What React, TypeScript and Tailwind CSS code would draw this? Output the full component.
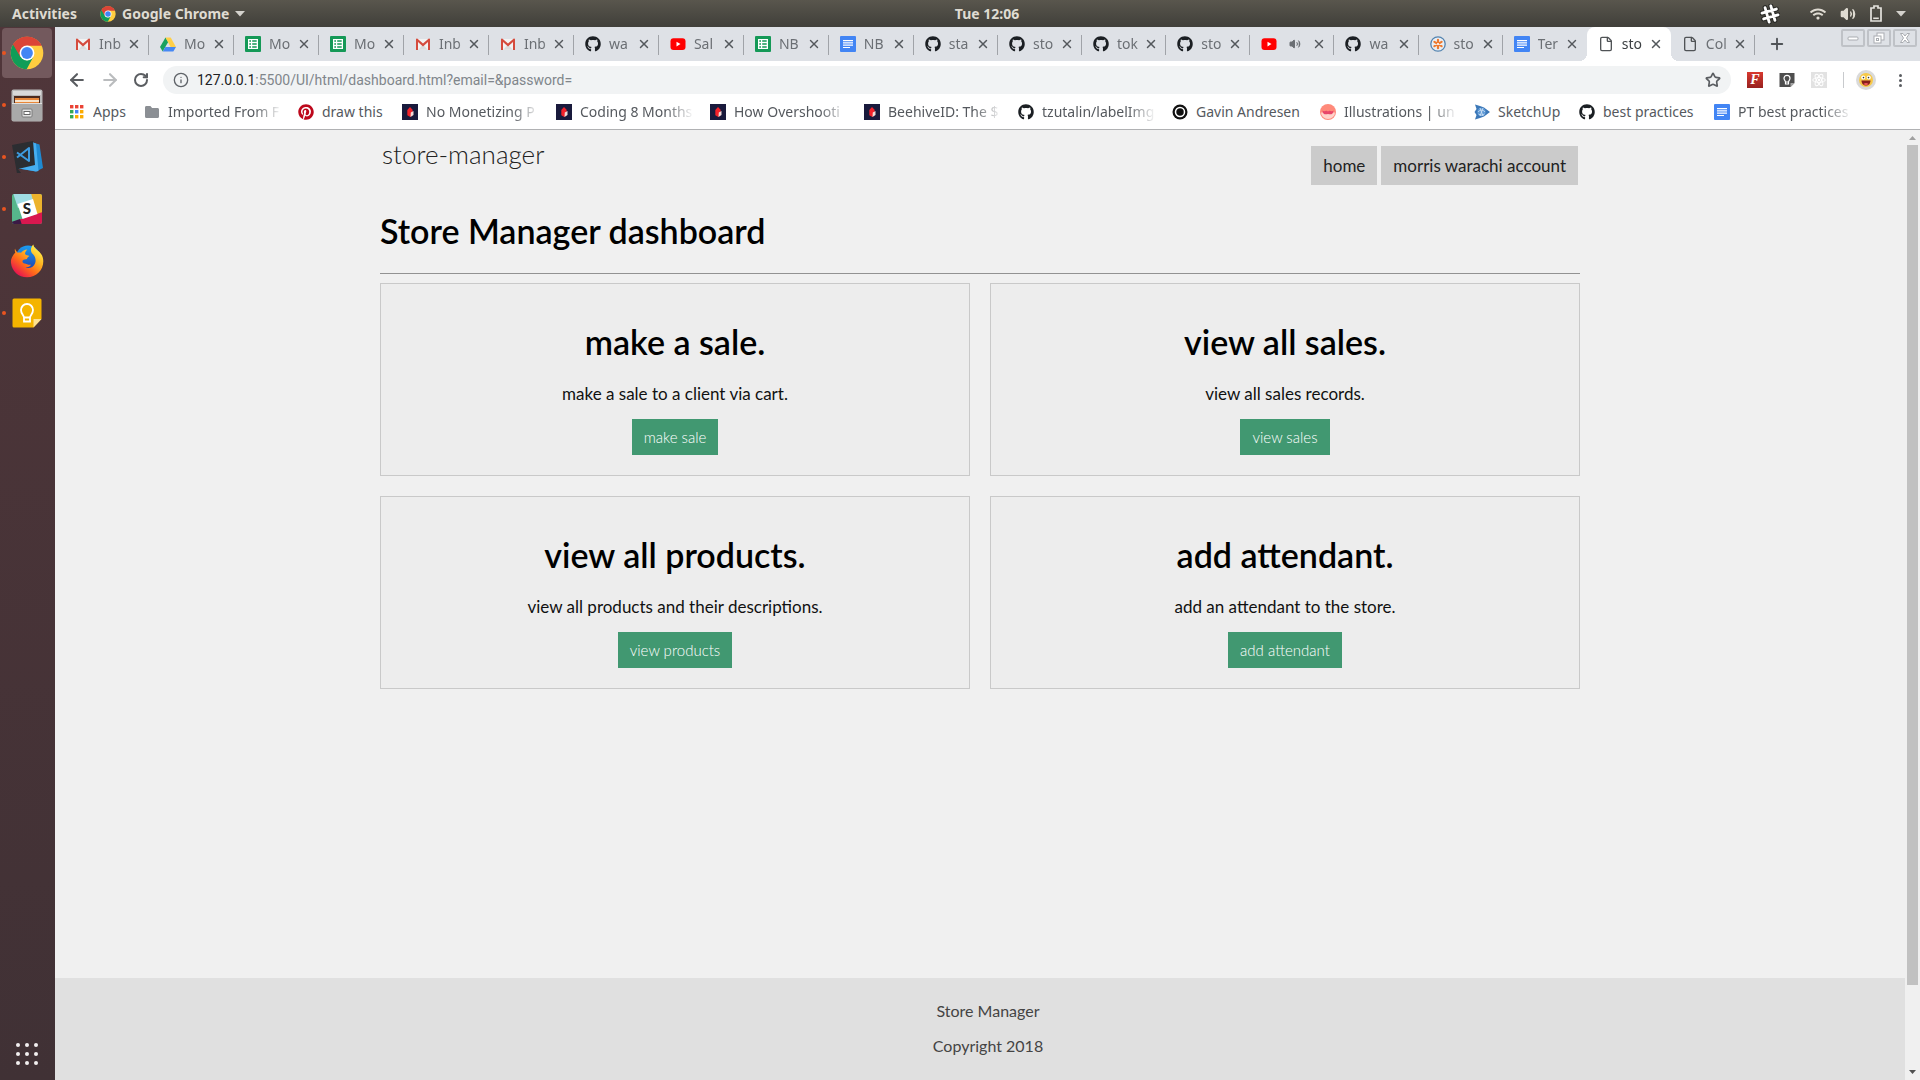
import { useId, type ReactNode } from "react";
import { FaGithub, FaPinterest, FaWifi } from "react-icons/fa";
import { ArrowLeft, ArrowRight, File, Info, Lightbulb, Plus, RotateCw, Star, Volume2, X } from "lucide-react";

/* ---------- icons ---------- */

function ChromeLogo({ className }: { className: string }) {
  const id = useId();
  return (
    <svg viewBox="0 0 48 48" className={className} aria-hidden="true">
      <clipPath id={id}>
        <circle cx="24" cy="24" r="23" />
      </clipPath>
      <g clipPath={`url(#${id})`}>
        <rect width="48" height="48" fill="#ffcd40" />
        <path d="M0 0h48v13.5H24L14.5 29 0 8z" fill="#db4437" />
        <path d="M4 11 14.9 29.2 24 34.5 32.6 30 23 48H0V6z" fill="#0f9d58" />
        <path d="M3 9.5 14.6 29.4 14 22 24 13.5h24V0H0z" fill="#db4437" />
      </g>
      <circle cx="24" cy="24" r="10.5" fill="#fff" />
      <circle cx="24" cy="24" r="8.3" fill="#4285f4" />
    </svg>
  );
}

function Gmail() {
  return (
    <svg viewBox="0 0 16 16" className="size-4" aria-hidden="true">
      <path d="M1.5 3h13v10.5h-13z" fill="#f2f2f2" />
      <path d="m3.5 13.5 4.5-5 4.5 5z" fill="#dcdcdc" />
      <path d="M1 3.2V14h2V6l5 4.4L13 6v8h2V3.2c0-.6-.8-.9-1.5-.5L8 7.6 2.5 2.7C1.800 2.300 1 2.600 1 3.200z" fill="#d54b3d" />
    </svg>
  );
}

function Drive() {
  return (
    <svg viewBox="0 0 16 16" className="size-4" aria-hidden="true">
      <path d="M5.500 1.500 0 11l2.700 4.500L8.200 6z" fill="#1aa15f" />
      <path d="M5.500 1.500h5.200L16 11h-5.400z" fill="#ffcf48" />
      <path d="M5.400 11H16l-2.700 4.500H2.700z" fill="#4688f4" />
    </svg>
  );
}

function Sheets() {
  return (
    <svg viewBox="0 0 16 16" className="size-4" aria-hidden="true">
      <rect width="16" height="16" rx="1" fill="#159957" />
      <path d="M3 3h10v10H3z" fill="#fff" />
      <path d="M4.300 4.300H6v1.500H4.300zM7.200 4.300h4.500v1.500H7.200zM4.300 7.200H6v1.500H4.300zM7.200 7.200h4.500v1.500H7.200zM4.300 10.200H6v1.500H4.300zM7.200 10.200h4.500v1.500H7.200z" fill="#159957" />
    </svg>
  );
}

function Docs() {
  return (
    <svg viewBox="0 0 16 16" className="size-4" aria-hidden="true">
      <rect width="16" height="16" rx="1" fill="#4285f4" />
      <path d="M3 4h10v1.200H3zM3 6.300h10v1.200H3zM3 8.600h10v1.200H3zM3 10.900h7v1.200H3z" fill="#fff" />
    </svg>
  );
}

function YouTube() {
  return (
    <svg viewBox="0 0 16 16" className="size-4" aria-hidden="true">
      <rect x="0.500" y="2.200" width="15" height="11.800" rx="3" fill="#f00" />
      <path d="m6.500 5.700 4 2.400-4 2.400z" fill="#fff" />
    </svg>
  );
}

const GitHub = () => <FaGithub className="size-4 text-[#1b1f23]" aria-hidden="true" />;
const Page = () => <File className="size-4 text-[#505356]" strokeWidth={2} aria-hidden="true" />;

function Swirl() {
  return (
    <svg viewBox="0 0 16 16" className="size-4" aria-hidden="true">
      <circle cx="8" cy="8" r="7.200" fill="#e9eef3" stroke="#5484b0" strokeWidth="1.300" />
      <g stroke="#ee7a30" strokeWidth="2.200" strokeLinecap="round">
        <path d="M8 3.800v8.400M4.400 5.900l7.200 4.200M11.600 5.900l-7.200 4.200" />
      </g>
      <circle cx="8" cy="8" r="1.100" fill="#fff" />
    </svg>
  );
}

function AppsGrid() {
  const colors = ["#ea4335", "#ea4335", "#ea4335", "#34a853", "#4285f4", "#fbab00", "#34a853", "#fbab00", "#fbab00"];
  return (
    <svg viewBox="0 0 16 16" className="size-4" aria-hidden="true">
      {colors.map((c, i) => (
        <rect key={i} x={1 + (i % 3) * 5} y={1 + Math.floor(i / 3) * 5} width="3.400" height="3.400" fill={c} />
      ))}
    </svg>
  );
}

function Folder() {
  return (
    <svg viewBox="0 0 16 16" className="size-4" aria-hidden="true">
      <path d="M1 3.500C1 2.700 1.600 2 2.400 2h4l1.700 2h5.500c.8 0 1.400.7 1.400 1.500v7c0 .8-.6 1.500-1.400 1.500H2.400C1.600 14 1 13.300 1 12.500z" fill="#8b8f94" />
    </svg>
  );
}

function Gem() {
  return (
    <svg viewBox="0 0 16 16" className="size-4" aria-hidden="true">
      <rect width="16" height="16" fill="#191a3c" />
      <path d="m8 3 2.600 2.800V11l-2.300 2-3-1.800V6z" fill="#f3222a" />
      <path d="m8.800 8.500 2.700-1.500v4l-3 2z" fill="#f3dcd8" />
    </svg>
  );
}

function Ring() {
  return (
    <svg viewBox="0 0 16 16" className="size-4" aria-hidden="true">
      <circle cx="8" cy="8" r="7.500" fill="#111" />
      <circle cx="8" cy="8" r="4.500" fill="#111" stroke="#fff" strokeWidth="1.500" />
    </svg>
  );
}

function Undraw() {
  return (
    <svg viewBox="0 0 16 16" className="size-4" aria-hidden="true">
      <circle cx="8" cy="8" r="8" fill="#ff8a7a" />
      <path d="M1 8.500h14a7 6.500 0 0 1-14 0z" fill="#ffd3cb" />
      <path d="M2.500 6.500c2 2 3.500-1 5.500 1 2-2 3.500 1 5.500-1C13.500 10 11 11 8 10c-3 1-5.500 0-5.500-3.500z" fill="#e8476a" />
    </svg>
  );
}

function SketchUp() {
  return (
    <svg viewBox="0 0 16 16" className="size-4" aria-hidden="true">
      <path d="M1 .5 6 2l4 1.500L16 8l-6 4.500L6 14l-5 1.500L2.500 11 .5 8l2-3z" fill="#3c78b8" />
      <circle cx="7.500" cy="8" r="4.200" fill="#5f9ad6" />
      <path d="M4 8c2-2.500 5-2.500 7 0M4.500 10c2 1.500 4.500 1.500 6 0M6 4l3 8M9 4 6 12" stroke="#d5e6f7" strokeWidth=".8" fill="none" />
    </svg>
  );
}

function SlackHash() {
  return (
    <svg viewBox="0 0 20 20" className="size-5" aria-hidden="true">
      {["#2a2a27", "#fff"].map((c, i) => (
        <g key={c} stroke={c} strokeWidth={i ? 2.800 : 5} strokeLinecap="round" transform="rotate(-16 10 10)">
          <path d="M7 2.500v15M13 2.500v15M2.500 7h15M2.500 13h15" />
        </g>
      ))}
    </svg>
  );
}

function Caret() {
  return (
    <svg viewBox="0 0 10 6" className="h-1.5 w-2.5" aria-hidden="true">
      <path d="M0 0h10L5 5.500z" fill="#d4d2cd" />
    </svg>
  );
}

function Battery() {
  return (
    <svg viewBox="0 0 12 17" className="h-[17px] w-3" aria-hidden="true">
      <path d="M4 1h4v2h3v13H1V3h3z" fill="none" stroke="#e4e2dd" strokeWidth="1.700" />
      <path d="M3.200 12.500h5.600v1.600H3.200z" fill="#e4e2dd" />
    </svg>
  );
}

function ReactMark() {
  return (
    <svg viewBox="0 0 16 16" className="size-4" aria-hidden="true">
      <rect width="16" height="16" fill="#e2e2e2" />
      <g fill="none" stroke="#fff" strokeWidth="1">
        <ellipse cx="8" cy="8" rx="6.300" ry="2.400" />
        <ellipse cx="8" cy="8" rx="6.300" ry="2.400" transform="rotate(60 8 8)" />
        <ellipse cx="8" cy="8" rx="6.300" ry="2.400" transform="rotate(120 8 8)" />
      </g>
      <circle cx="8" cy="8" r="1.200" fill="#fff" />
    </svg>
  );
}

function KeepMini() {
  return (
    <svg viewBox="0 0 16 16" className="size-4" aria-hidden="true">
      <path d="M.5 1h15v10l-4 4H.5z" fill="#4e4e4e" />
      <path d="M15.500 11v0l-4 4v-4z" fill="#a5a5a5" />
      <path d="M6.500 10C6.500 8.800 5 8.300 5 6.300a3 3 0 0 1 6 0c0 2-1.500 2.500-1.500 3.700zM6.500 10.500V12h3v-1.500" fill="none" stroke="#fff" strokeWidth="1.200" />
    </svg>
  );
}

function Avatar() {
  return (
    <svg viewBox="0 0 20 20" className="size-5" aria-hidden="true">
      <circle cx="10" cy="10" r="10" fill="#dadada" />
      <circle cx="10" cy="10" r="7" fill="#f7c948" />
      <circle cx="7.200" cy="7.500" r="2" fill="#fff" />
      <circle cx="12.800" cy="7.500" r="2" fill="#fff" />
      <circle cx="7.500" cy="7.600" r=".8" fill="#333" />
      <circle cx="12.500" cy="7.600" r=".8" fill="#333" />
      <path d="M5.500 10.500h9c0 3-2 5-4.500 5s-4.500-2-4.500-5z" fill="#8a1f1b" />
      <path d="M7.500 14c1.500-1.300 3.500-1.300 5 0-1.300 1.500-3.700 1.500-5 0z" fill="#ef5b5b" />
    </svg>
  );
}

function Files() {
  return (
    <svg viewBox="0 0 32 33" className="h-[33px] w-8" aria-hidden="true">
      <rect x=".5" y=".5" width="31" height="32" rx="2" fill="#b9b9b9" />
      <rect x="2" y="2" width="28" height="4" fill="#d9d9d9" />
      <rect x="3" y="7" width="26" height="8" fill="#4b2a1e" />
      <rect x="4" y="9" width="24" height="5" fill="#e8873a" />
      <rect x="4" y="11" width="24" height="2" fill="#f7e3cb" />
      <rect x="1" y="14" width="30" height="18" rx="1" fill="#a9a9a9" />
      <rect x="1" y="14" width="30" height="1" fill="#dedede" />
      <rect x="11" y="20" width="10" height="8" rx="1" fill="#e3e3e3" stroke="#7b7b7b" />
      <rect x="13" y="22.500" width="6" height="3" fill="#fff" stroke="#666" />
    </svg>
  );
}

function VSCode() {
  return (
    <svg viewBox="0 0 32 32" className="size-8" aria-hidden="true">
      <path d="M22 1.500 28.500 3.500 32 27l-7 3.500L8 27.500z" fill="#1f8ad2" />
      <path d="m22 1.500 3 1L27.500 30l-2.500.5L8 27.500z" fill="#46aef0" />
      <path d="M1 4 22 0l2 24-17 4 3 4-4 .5z" fill="#2b2d31" />
      <path d="m6 11.500 12 8.500V7L6 16.500" fill="none" stroke="#3d9be0" strokeWidth="2" strokeLinejoin="round" />
    </svg>
  );
}

function SlackTile() {
  return (
    <svg viewBox="0 0 32 32" className="size-8" aria-hidden="true">
      <clipPath id="slack-tile">
        <rect x="1" y="1" width="30" height="30" rx="2" />
      </clipPath>
      <g clipPath="url(#slack-tile)">
        <path d="M0 0h32v32H0z" fill="#56b68b" />
        <path d="M2 0h22l3 8-20 7z" fill="#9fdce3" />
        <path d="M20 0h12v22l-6 1z" fill="#ecb32d" />
        <path d="m32 19-25 8 3 5h22z" fill="#d9184f" />
        <path d="m0 29 9-3 2 6H0z" fill="#3b1a45" />
        <path d="m6.500 11 15.500-5 4.500 15-15 5z" fill="#fff" />
      </g>
      <text x="16" y="21" textAnchor="middle" fontFamily="Lato, sans-serif" fontWeight="900" fontSize="15" fill="#222">
        S
      </text>
    </svg>
  );
}

function Firefox() {
  return (
    <svg viewBox="0 0 34 34" className="size-[34px]" aria-hidden="true">
      <defs>
        <linearGradient id="fox" x1="0.850" y1="0.100" x2="0.200" y2="0.900">
          <stop offset="0" stopColor="#fff04a" />
          <stop offset="0.350" stopColor="#ffb020" />
          <stop offset="0.650" stopColor="#ff6a1a" />
          <stop offset="1" stopColor="#e8174e" />
        </linearGradient>
        <linearGradient id="globe" x1="0" y1="0" x2="0" y2="1">
          <stop offset="0" stopColor="#1b9df0" />
          <stop offset="1" stopColor="#1f3fae" />
        </linearGradient>
      </defs>
      <circle cx="18" cy="14" r="12.500" fill="url(#globe)" />
      <path
        d="M5 4.500C4.600 6 4.800 7.500 5.300 8.600 2 12 .6 15.500 1 19c.8 8 7.500 14.300 16 14.300 9.500 0 16.300-7.300 16.300-16 0-5-2.300-8.300-5-10.300-2.300-1.800-4.600-3.700-5-6.500-2.600 2.800-3 6-1.500 8.500 3.300 2.500 4.700 6.800 3.200 10.500-1.700 4-6 5.500-9.500 4 2.500 0 4.500-1 5.500-2.800-2.500.6-4.500-1-6.500-1.200-1.500-.2-2.500-1.500-1.800-3 1-1.500 3-1 4.300-1.500 0-1.500 1.500-2.300 2.500-3-1.800-.8-3.500-.6-4.500-2 .2-2 1-3.300 2.300-4.500-2.800.2-4.800 1.500-6.300 3.200-1.300-.4-2.300-.3-3.300 0C6.400 7.600 5.400 6.200 5 4.500z"
        fill="url(#fox)"
      />
    </svg>
  );
}

function Keep() {
  return (
    <svg viewBox="0 0 30 30" className="size-[30px]" aria-hidden="true">
      <path d="M2 .5h26a1.500 1.500 0 0 1 1.500 1.500v19l-8 8.500H2A1.500 1.500 0 0 1 .5 28V2A1.500 1.500 0 0 1 2 .5z" fill="#f4b400" />
      <path d="M29.500 21v0l-8 8.500V21z" fill="#fde293" />
      <path d="M12 19.500c0-2-3-3.500-3-7.500a6 6 0 0 1 12 0c0 4-3 5.500-3 7.500zM12 20v3.500h6V20" fill="none" stroke="#fff" strokeWidth="1.800" />
    </svg>
  );
}

/* ---------- data ---------- */

const tabs: { title: string; icon: () => ReactNode; active?: boolean; sound?: boolean }[] = [
  { title: "Inb", icon: Gmail },
  { title: "Mo", icon: Drive },
  { title: "Mo", icon: Sheets },
  { title: "Mo", icon: Sheets },
  { title: "Inb", icon: Gmail },
  { title: "Inb", icon: Gmail },
  { title: "wa", icon: GitHub },
  { title: "Sal", icon: YouTube },
  { title: "NB", icon: Sheets },
  { title: "NB", icon: Docs },
  { title: "sta", icon: GitHub },
  { title: "sto", icon: GitHub },
  { title: "tok", icon: GitHub },
  { title: "sto", icon: GitHub },
  { title: "", icon: YouTube, sound: true },
  { title: "wa", icon: GitHub },
  { title: "sto", icon: Swirl },
  { title: "Ter", icon: Docs },
  { title: "sto", icon: Page, active: true },
  { title: "Col", icon: Page },
];

const fade = "[mask-image:linear-gradient(to_right,black_75%,transparent)]";

const bookmarks: { title: string; icon: () => ReactNode; size: string }[] = [
  { title: "Apps", icon: AppsGrid, size: "w-[35px]" },
  { title: "Imported From F", icon: Folder, size: "w-[114px] " + fade },
  { title: "draw this", icon: () => <FaPinterest className="size-4 text-[#bd081c]" aria-hidden="true" />, size: "w-16" },
  { title: "No Monetizing P", icon: Gem, size: "w-[114px] " + fade },
  { title: "Coding 8 Months", icon: Gem, size: "w-[114px] " + fade },
  { title: "How Overshooti", icon: Gem, size: "w-[114px] " + fade },
  { title: "BeehiveID: The $", icon: Gem, size: "w-[114px] " + fade },
  { title: "tzutalin/labelImg", icon: GitHub, size: "w-[114px] " + fade },
  { title: "Gavin Andresen", icon: Ring, size: "w-[108px]" },
  { title: "Illustrations | un", icon: Undraw, size: "w-[114px] " + fade },
  { title: "SketchUp", icon: SketchUp, size: "w-[65px]" },
  { title: "best practices", icon: GitHub, size: "w-[95px]" },
  { title: "PT best practices", icon: Docs, size: "w-[114px] " + fade },
];

const dock = [
  { name: "Google Chrome", icon: <ChromeLogo className="size-[34px]" />, running: true, active: true },
  { name: "Files", icon: <Files />, running: true },
  { name: "Visual Studio Code", icon: <VSCode />, running: true },
  { name: "Slack", icon: <SlackTile />, running: true },
  { name: "Firefox", icon: <Firefox />, running: false },
  { name: "Keep", icon: <Keep />, running: true },
];

const cards = [
  { title: "make a sale.", text: "make a sale to a client via cart.", action: "make sale" },
  { title: "view all sales.", text: "view all sales records.", action: "view sales" },
  { title: "view all products.", text: "view all products and their descriptions.", action: "view products" },
  { title: "add attendant.", text: "add an attendant to the store.", action: "add attendant" },
];

/* ---------- desktop ---------- */

function TopBar() {
  return (
    <header className="flex h-[27px] shrink-0 items-center bg-linear-to-b from-[#59564d] to-[#403f3a] px-3 text-sm font-bold text-[#dfdbd2]">
      <div className="flex flex-1 items-center">
        <button className="w-[88px] text-left">Activities</button>
        <button className="flex items-center gap-1.5">
          <ChromeLogo className="size-4" />
          Google Chrome
          <Caret />
        </button>
      </div>
      <button className="pl-14">Tue 12:06</button>
      <div className="flex flex-1 items-center justify-end pr-0.5">
        <button aria-label="Slack" className="mr-[30px]">
          <SlackHash />
        </button>
        <button aria-label="System menu" className="flex items-center gap-3.5">
          <FaWifi className="size-4" />
          <Volume2 className="size-4 fill-current" />
          <Battery />
          <Caret />
        </button>
      </div>
    </header>
  );
}

function Dock() {
  return (
    <nav aria-label="Dock" className="flex w-[55px] shrink-0 flex-col bg-linear-to-b from-[#50363a] to-[#403135]">
      {dock.map((d) => (
        <div key={d.name} className="flex h-[52px] items-center">
          <button
            aria-label={d.name}
            className={"relative mx-0.5 flex h-[50px] w-[50px] items-center justify-center rounded-sm " + (d.active ? "bg-[#73595d]" : "")}
          >
            {d.running && <span className="absolute left-0 size-1 rounded-full bg-[#e95420]" />}
            {d.icon}
          </button>
        </div>
      ))}
      <button aria-label="Show applications" className="mt-auto mb-[15px] ml-4 grid w-[22px] grid-cols-3 gap-[5px]">
        {Array.from({ length: 9 }, (_, i) => (
          <span key={i} className="size-1 rounded-full bg-[#f2f0f0]" />
        ))}
      </button>
    </nav>
  );
}

function WindowButton({ label, children }: { label: string; children: ReactNode }) {
  return (
    <button aria-label={label} className="flex h-[18px] w-6 items-center justify-center rounded-xs border-2 border-[#bfc2c7] bg-[#dee1e6]">
      <svg viewBox="0 0 14 12" className="h-3 w-3.5" fill="#fff" stroke="#a9acb1" aria-hidden="true">
        {children}
      </svg>
    </button>
  );
}

function TabStrip() {
  return (
    <div className="flex h-[34px] bg-[#dee1e6] pl-[9px] text-sm text-[#6b6f74]">
      <div role="tablist" className="flex min-w-0 flex-1">
        {tabs.map((t, i) => (
          <div
            key={i}
            className={
              "relative flex min-w-0 items-center pl-[11px] " +
              (i < 10 ? "flex-[85] " : "flex-[84] ") +
              (t.active ? "rounded-t-lg bg-white text-[#3c4043]" : "")
            }
          >
            {t.active && (
              <>
                <span className="absolute bottom-0 -left-2 size-2 bg-[radial-gradient(circle_at_0_0,transparent_8px,white_8px)]" />
                <span className="absolute -right-2 bottom-0 size-2 bg-[radial-gradient(circle_at_100%_0,transparent_8px,white_8px)]" />
              </>
            )}
            <button role="tab" aria-selected={!!t.active} className="flex min-w-0 flex-1 items-center gap-2">
              <span className="shrink-0">
                <t.icon />
              </span>
              <span className={"flex-1 overflow-hidden text-left whitespace-nowrap " + fade}>
                {t.sound ? <Volume2 className="ml-1 size-3 fill-current" aria-label="Playing audio" /> : t.title}
              </span>
            </button>
            <button aria-label="Close tab" className="mr-2 ml-0.5 shrink-0">
              <X className="size-3.5 text-[#54585c]" strokeWidth={2.5} />
            </button>
            {!t.active && i !== 17 && <span className="absolute top-2 right-0 h-5 w-px bg-[#a0a3a8]" />}
          </div>
        ))}
      </div>
      <div className="flex w-[165px] shrink-0 items-center pl-[13px]">
        <button aria-label="New tab">
          <Plus className="size-[18px] text-[#4f5357]" strokeWidth={2.500} />
        </button>
        <div className="mr-[3px] ml-auto flex gap-0.5 self-start pt-0.5">
          <WindowButton label="Minimize">
            <rect x="2" y="5" width="10" height="3" rx="1" />
          </WindowButton>
          <WindowButton label="Restore">
            <rect x="5" y="1" width="7" height="7" />
            <rect x="2" y="4" width="7" height="7" />
            <rect x="4.500" y="6.500" width="2" height="2" />
          </WindowButton>
          <WindowButton label="Close">
            <path d="m2.500 1.500 2.500 0 2 2.500 2-2.500h2.500L8.500 6l3 4.500H9L7 8l-2 2.500H2.500l3-4.500z" />
          </WindowButton>
        </div>
      </div>
    </div>
  );
}

function Toolbar() {
  return (
    <div className="flex h-[38px] items-center bg-white pr-3">
      <div className="flex w-[108px] items-center justify-between pr-3.5 pl-3">
        <button aria-label="Back">
          <ArrowLeft className="size-5 text-[#5a5d61]" strokeWidth={2.500} />
        </button>
        <button aria-label="Forward">
          <ArrowRight className="size-5 text-[#babcbe]" strokeWidth={2.500} />
        </button>
        <button aria-label="Reload">
          <RotateCw className="size-4 text-[#5a5d61]" strokeWidth={3} />
        </button>
      </div>
      <div className="flex h-7 min-w-0 flex-1 items-center rounded-full bg-[#f1f3f4] px-2.5 font-[Roboto,sans-serif]">
        <Info className="size-4 shrink-0 text-[#5f6368]" aria-hidden="true" />
        <div className="ml-2 flex-1 text-sm whitespace-nowrap text-[#80868b]">
          <span className="text-[#202124]">127.0.0.1</span>
          :5500/UI/html/dashboard.html?email=&password=
        </div>
        <button aria-label="Bookmark this page">
          <Star className="size-4 text-[#5a5d61]" strokeWidth={2.500} />
        </button>
      </div>
      <div className="flex items-center gap-4 pl-4">
        <button
          aria-label="Font extension"
          className="flex size-4 items-center justify-center bg-linear-to-b from-[#d8392f] to-[#98211f] font-[Liberation_Serif,serif] text-sm leading-4 font-bold text-white italic"
        >
          F
        </button>
        <button aria-label="Save to Keep">
          <KeepMini />
        </button>
        <button aria-label="React developer tools">
          <ReactMark />
        </button>
        <span className="h-4 w-px bg-[#c8cacd]" />
        <button aria-label="Profile" className="-ml-1">
          <Avatar />
        </button>
        <button aria-label="Menu" className="flex w-4 flex-col items-center gap-0.5">
          <span className="size-[3px] rounded-full bg-[#5a5d61]" />
          <span className="size-[3px] rounded-full bg-[#5a5d61]" />
          <span className="size-[3px] rounded-full bg-[#5a5d61]" />
        </button>
      </div>
    </div>
  );
}

function Bookmarks() {
  return (
    <nav aria-label="Bookmarks" className="flex h-[31px] gap-4 overflow-hidden border-b border-[#b0b1b3] bg-white pl-[14px] text-sm text-[#55595e]">
      {bookmarks.map((b) => (
        <a key={b.title} href="#" className="flex h-[26px] shrink-0 items-center gap-2">
          <b.icon />
          <span className={"overflow-hidden whitespace-nowrap " + b.size}>{b.title}</span>
        </a>
      ))}
    </nav>
  );
}

/* ---------- web page ---------- */

function Dashboard() {
  return (
    <div className="flex min-w-0 flex-1 flex-col bg-[#f0f0f0] font-[Lato,sans-serif] text-[17px] text-black">
      <div className="mx-auto w-full max-w-[1200px] flex-1">
        <header className="flex items-start justify-between px-0.5 pt-4">
          <a href="#" className="text-[26px] leading-4 font-light text-[#222]">
            store-manager
          </a>
          <nav className="flex gap-1 leading-[39px] text-[#222]">
            <a href="#" className="bg-[#cbcbcb] px-3">
              home
            </a>
            <a href="#" className="bg-[#cbcbcb] px-3">
              morris warachi account
            </a>
          </nav>
        </header>
        <main>
          <h1 className="mt-[26px] text-[34px] leading-10 font-semibold">Store Manager dashboard</h1>
          <hr className="mt-[22px] mb-[9px] border-[#929292]" />
          <div className="grid grid-cols-2 gap-5">
            {cards.map((c) => (
              <section key={c.title} className="flex flex-col items-center border border-[#c9c9c9] bg-[#ededed] pt-[38px] pb-5">
                <h2 className="text-[34px] leading-10 font-semibold">{c.title}</h2>
                <p className="mt-[22px] leading-5 text-[#111]">{c.text}</p>
                <button className="mt-[15px] h-9 bg-[#419871] px-3 text-[15px] font-light text-white">{c.action}</button>
              </section>
            ))}
          </div>
        </main>
      </div>
      <footer className="bg-[#e0e0e0] pt-[23px] pb-6 pl-4 text-center text-base leading-5 text-[#444]">
        <p>Store Manager</p>
        <p className="mt-[15px]">Copyright 2018</p>
      </footer>
    </div>
  );
}

function Scrollbar() {
  return (
    <div className="flex w-[15px] shrink-0 flex-col items-center bg-[#f0f0f0]">
      <svg viewBox="0 0 15 15" className="size-[15px]" aria-hidden="true">
        <path d="M4 10h7L7.500 6z" fill="#a0a0a0" />
      </svg>
      <div className="w-[11px] flex-[839] bg-[#c1c1c1]" />
      <div className="flex-[80]" />
      <svg viewBox="0 0 15 15" className="size-[15px]" aria-hidden="true">
        <path d="M4 5h7L7.500 9z" fill="#505050" />
      </svg>
    </div>
  );
}

export default function App() {
  return (
    <div className="flex min-h-screen flex-col font-[Noto_Sans,sans-serif]">
      <TopBar />
      <div className="flex flex-1">
        <Dock />
        <div className="flex min-w-0 flex-1 flex-col">
          <TabStrip />
          <Toolbar />
          <Bookmarks />
          <div className="flex flex-1">
            <Dashboard />
            <Scrollbar />
          </div>
        </div>
      </div>
    </div>
  );
}
